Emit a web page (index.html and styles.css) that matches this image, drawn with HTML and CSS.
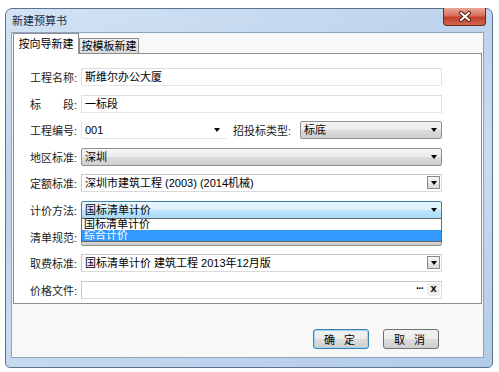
FILE: index.html
```html
<!DOCTYPE html>
<html lang="zh-CN">
<head>
  <meta charset="UTF-8" />
  <title>新建预算书</title>
  <link rel="stylesheet" href="styles.css">
</head>
<body>
  <div class="window">
    <div class="titlebar">
      <span class="title">新建预算书</span>
      <button class="close">
        <svg width="14" height="11" viewBox="0 0 14 11">
          <path d="M3 2 L11 9 M11 2 L3 9" stroke="#4a1a12" stroke-width="4" stroke-linecap="round"/>
          <path d="M3 2 L11 9 M11 2 L3 9" stroke="#fff" stroke-width="2.2" stroke-linecap="round"/>
        </svg>
      </button>
    </div>

    <div class="client">
      <div class="tabs">
        <div class="tab active">按向导新建</div>
        <div class="tab">按模板新建</div>
      </div>

      <div class="panel">
        <div class="row">
          <span class="lbl">工程名称:</span>
          <div class="field text">斯维尔办公大厦</div>
        </div>
        <div class="row">
          <span class="lbl">标　　段:</span>
          <div class="field text">一标段</div>
        </div>
        <div class="row">
          <span class="lbl">工程编号:</span>
          <div class="field combo short">001</div>
          <span class="lbl lbl-mid">招投标类型:</span>
          <div class="field select narrow">标底</div>
        </div>
        <div class="row">
          <span class="lbl">地区标准:</span>
          <div class="field select">深圳</div>
        </div>
        <div class="row">
          <span class="lbl">定额标准:</span>
          <div class="field picker">深圳市建筑工程 (2003) (2014机械)<span class="pbtn arrow"></span></div>
        </div>
        <div class="row open">
          <span class="lbl">计价方法:</span>
          <div class="field select focus">国标清单计价</div>
          <ul class="dropdown">
            <li>国标清单计价</li>
            <li class="hl">综合计价</li>
          </ul>
        </div>
        <div class="row">
          <span class="lbl">清单规范:</span>
          <div class="field select"></div>
        </div>
        <div class="row">
          <span class="lbl">取费标准:</span>
          <div class="field picker">国标清单计价 建筑工程 2013年12月版<span class="pbtn arrow"></span></div>
        </div>
        <div class="row">
          <span class="lbl">价格文件:</span>
          <div class="field picker"><span class="pbtn dots">···</span><span class="pbtn clear">x</span></div>
        </div>
      </div>

      <div class="actions">
        <button class="btn default">确 定</button>
        <button class="btn">取 消</button>
      </div>
    </div>
  </div>
</body>
</html>
```

FILE: styles.css
```css
body {
  margin: 0;
  background: #fff;
  font-family: "Liberation Sans", "Noto Sans CJK SC", sans-serif;
  font-size: 11px;
  color: #000;
}

.window {
  margin: 8px 0 0 5px;
  width: 488px;
  height: 360px;
  box-sizing: border-box;
  border: 1px solid #5a7391;
  border-radius: 7px 7px 5px 5px;
  background: linear-gradient(160deg, #d3e3f4 0%, #bdd3eb 35%, #c9dcf1 60%, #b3cbe6 100%);
  padding: 0 8px 9px 5px;
  display: flex;
  flex-direction: column;
}

.titlebar {
  height: 23px;
  display: flex;
  justify-content: space-between;
}

.title {
  padding-left: 1px;
  line-height: 24px;
  font-size: 11px;
  color: #1e2a3a;
}

.close {
  align-self: flex-start;
  margin: -1px -2px 0 0;
  width: 43px;
  height: 18px;
  border: 1px solid #6b2b20;
  border-top: none;
  border-radius: 0 0 4px 4px;
  background: linear-gradient(#e9a896 0%, #d8705c 45%, #c1402c 55%, #d0664e 100%);
  display: flex;
  align-items: center;
  justify-content: center;
  padding: 0;
}

.client {
  flex: 1;
  background: #f8f8f8;
  border: 1px solid #8da4bf;
  padding: 0 0 0 1px;
  display: flex;
  flex-direction: column;
}

.tabs {
  display: flex;
  align-items: flex-end;
  height: 20px;
}

.tab {
  height: 15px;
  width: 60px;
  box-sizing: border-box;
  border: 1px solid #8e8e8e;
  border-bottom: none;
  background: linear-gradient(#f3f3f3, #dadada);
  text-align: center;
  line-height: 15px;
  font-size: 11px;
}

.tab.active {
  position: relative;
  z-index: 1;
  height: 21px;
  width: 66px;
  margin-bottom: -1px;
  background: #fff;
  line-height: 20px;
}

.panel {
  height: 251px;
  box-sizing: border-box;
  margin-right: 1px;
  background: #fff;
  border: 1px solid #8e8e8e;
  padding: 14px 0 0 16px;
  display: flex;
  flex-direction: column;
  gap: 8.6px;
}

.row {
  display: flex;
  align-items: center;
  height: 18px;
  flex: none;
  position: relative;
}

.lbl {
  width: 51px;
  flex: none;
  white-space: nowrap;
  color: #222;
}

.lbl-mid {
  width: 67px;
  margin-left: 6px;
}

.field {
  width: 361px;
  height: 18px;
  box-sizing: border-box;
  position: relative;
  padding-left: 3px;
  line-height: 16px;
  white-space: nowrap;
  background: #fff;
  border: 1px solid #abadb3;
}

.text {
  border-color: #dcdcdc #e2e2e2 #e6e6e6;
}

.short { width: 146px; border-color: #fff #fff #e4e4e4 #e4e4e4; }
.narrow { width: 142px; }

.combo::after,
.select::after,
.arrow::after {
  content: "";
  position: absolute;
  right: 4px;
  top: 6px;
  border-left: 3.5px solid transparent;
  border-right: 3.5px solid transparent;
  border-top: 4px solid #000;
}

.combo::after { right: 6px; }

.select {
  border-color: #8f8f8f;
  border-radius: 2px;
  background: linear-gradient(#f4f4f4 0%, #ebebeb 50%, #dcdcdc 51%, #cfcfcf 100%);
}

.select.focus {
  border-color: #3c7fb1;
  background: linear-gradient(#eaf6fd 0%, #d9f0fc 50%, #bee6fd 51%, #a7d9f5 100%);
}

.picker {
  border-color: #c5c5c5 #dadada #dadada #c5c5c5;
}

.pbtn {
  position: absolute;
  top: 1px;
  width: 13px;
  height: 13px;
  box-sizing: border-box;
  line-height: 11px;
  text-align: center;
  font-weight: bold;
}

.pbtn.arrow {
  right: 1px;
  border: 1px solid #8a8a8a;
  background: linear-gradient(#f4f4f4, #d8d8d8);
}

.pbtn.arrow::after {
  right: 2px;
  top: 4px;
}

.pbtn.dots {
  right: 15px;
  font-size: 10px;
  letter-spacing: -1px;
}

.pbtn.clear {
  right: 1px;
  font-size: 11px;
  background: #eee;
}

.dropdown {
  position: absolute;
  z-index: 2;
  left: 51px;
  top: 17px;
  width: 361px;
  margin: 0;
  padding: 0;
  list-style: none;
  box-sizing: border-box;
  border: 1px solid #6a6a6a;
  background: #fff;
}

.dropdown li {
  height: 11px;
  line-height: 11px;
  padding-left: 2px;
}

.dropdown li.hl {
  background: #3399ff;
  color: #fff;
}

.actions {
  display: flex;
  justify-content: flex-end;
  gap: 14px;
  margin: 25px 44px 0 0;
}

.btn {
  width: 56px;
  height: 20px;
  border: 1px solid #707070;
  border-radius: 3px;
  background: linear-gradient(#f2f2f2 0%, #ebebeb 50%, #dddddd 51%, #cfcfcf 100%);
  font-family: "Liberation Sans", "Noto Sans CJK SC", sans-serif;
  font-size: 11px;
  letter-spacing: 3px;
  padding: 0;
}

.btn.default {
  border-color: #3c7fb1;
  box-shadow: inset 0 0 0 1px #9fd4f4;
}
```
